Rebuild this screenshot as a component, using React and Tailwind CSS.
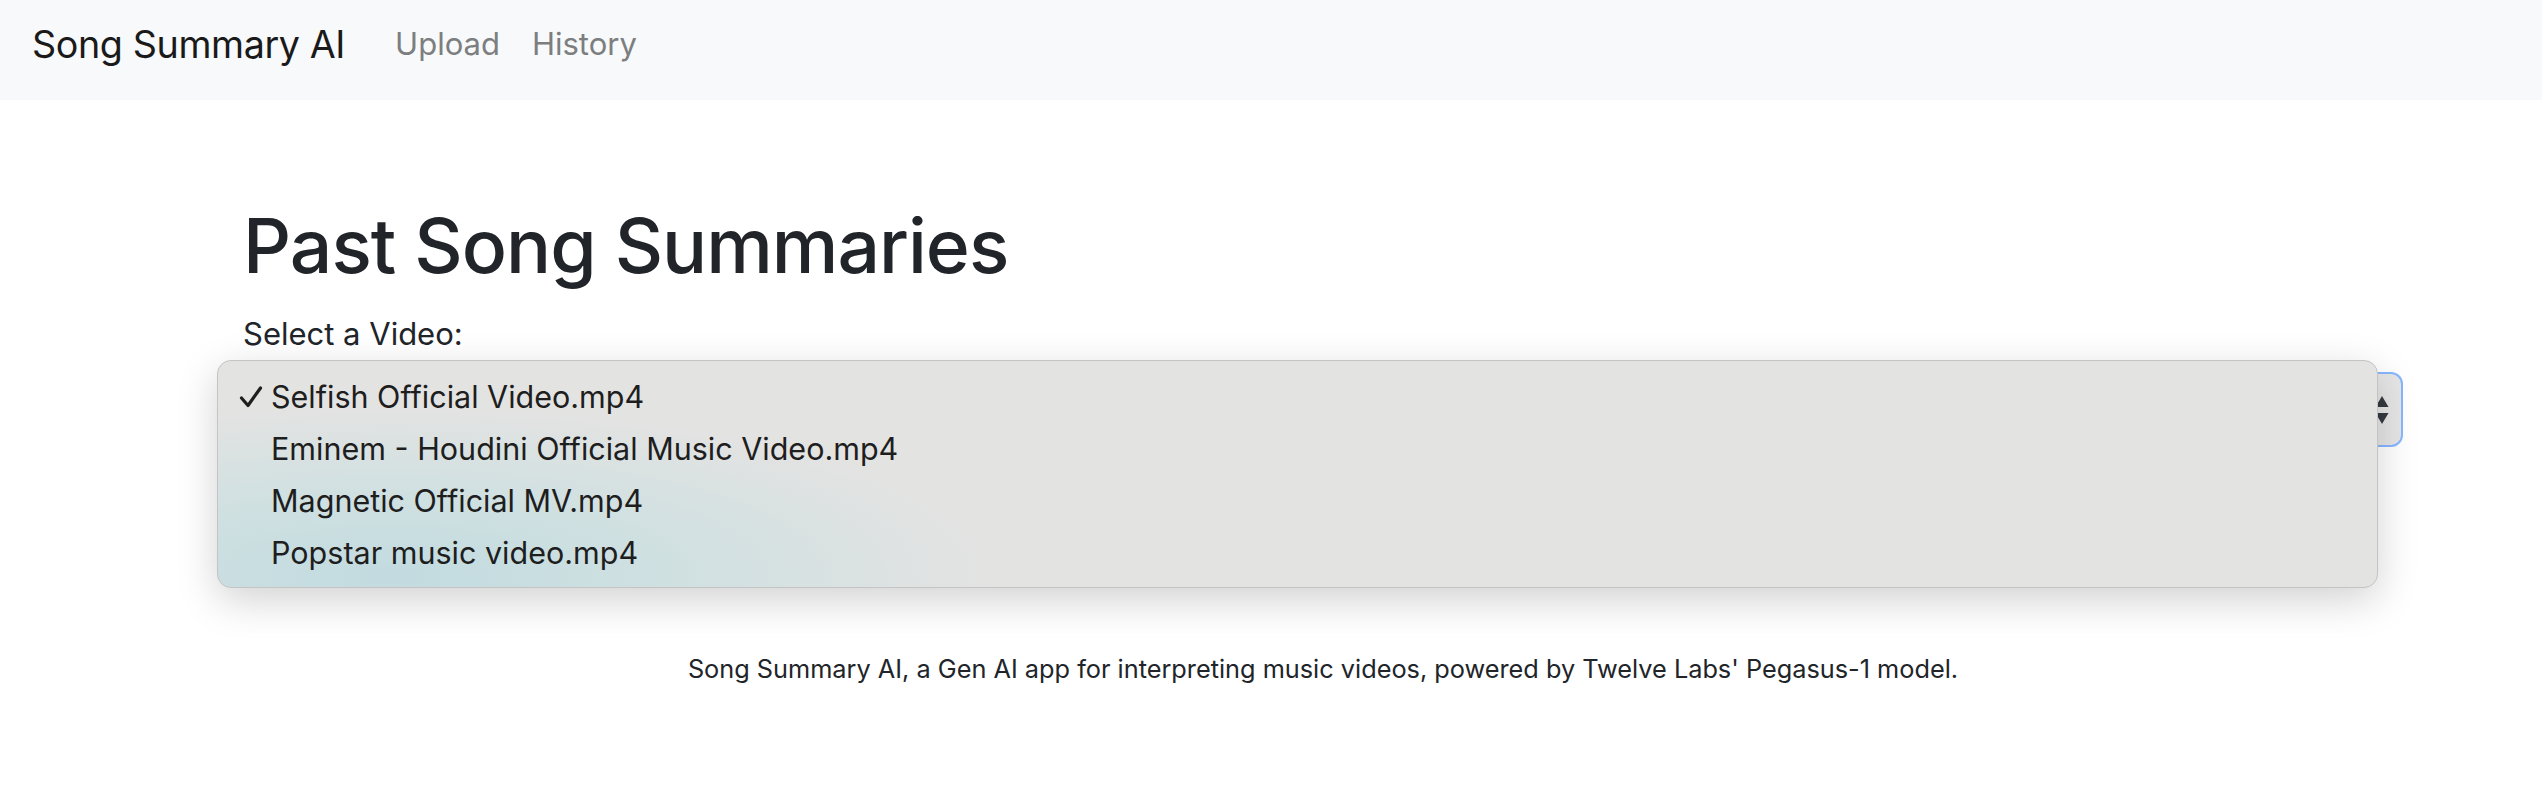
import { useState } from 'react';

const videos = [
  'Selfish Official Video.mp4',
  'Eminem - Houdini Official Music Video.mp4',
  'Magnetic Official MV.mp4',
  'Popstar music video.mp4',
];

function Check() {
  return (
    <svg width="24" height="22" viewBox="0 0 24 22" className="shrink-0">
      <path d="M2.5 12 L9 19.5 L21.5 2" fill="none" stroke="#1f1f1f" strokeWidth="3.2" strokeLinecap="round" strokeLinejoin="round" />
    </svg>
  );
}

function Arrows() {
  return (
    <svg width="14" height="30" viewBox="0 0 14 30">
      <path d="M7 1 L13.5 12 L0.5 12 Z" fill="#343a40" />
      <path d="M0.5 18 L13.5 18 L7 29 Z" fill="#343a40" />
    </svg>
  );
}

export default function App() {
  const [selected] = useState(0);

  return (
    <div className="min-h-screen bg-white text-[#212529] font-['Inter','Liberation_Sans',sans-serif]">
      <nav className="h-[100px] bg-[#f8f9fa] flex items-start pt-[14px] pl-[32px]">
        <a className="text-[37.7px] leading-[60px] tracking-[-0.4px] text-[#1a1a1a] mr-[34px]">Song Summary AI</a>
        <a className="text-[31px] leading-[60px] px-[16px] text-[#7c7e80]">Upload</a>
        <a className="text-[31px] leading-[60px] px-[16px] text-[#7c7e80]">History</a>
      </nav>

      <main className="pl-[243px] pr-[139px] pt-[99px]">
        <h1 className="text-[75px] leading-[94px] font-medium tracking-[-1px]">Past Song Summaries</h1>
        <label className="block mt-[17px] text-[31px] leading-[48px]">Select a Video:</label>

        <div className="relative mt-[14px]">
          <div className="h-[75px] rounded-[12px] border-2 border-[#86b7fe] bg-[#e6e6e6] flex items-center justify-end pr-[12px]">
            <Arrows />
          </div>

          <div className="absolute left-[-26px] top-[-12px] w-[2161px] h-[228px] rounded-[14px] border border-[#c4c4c4] bg-[radial-gradient(ellipse_28%_75%_at_8%_95%,#c2dbe0_0%,#cfe0e1_45%,#e3e3e2_100%)] bg-[#e3e3e2] shadow-[0_12px_40px_rgba(0,0,0,0.18)] py-[10px]">
            {videos.map((v, i) => (
              <div key={v} className="h-[52px] flex items-center pl-[21px]">
                <div className="w-[32px]">{i === selected && <Check />}</div>
                <span className="text-[30.5px] text-[#1e1e1e]">{v}</span>
              </div>
            ))}
          </div>
        </div>

        <footer className="mt-[203px] text-center text-[25.3px] leading-[38px]">
          Song Summary AI, a Gen AI app for interpreting music videos, powered by Twelve Labs' Pegasus-1 model.
        </footer>
      </main>
    </div>
  );
}
